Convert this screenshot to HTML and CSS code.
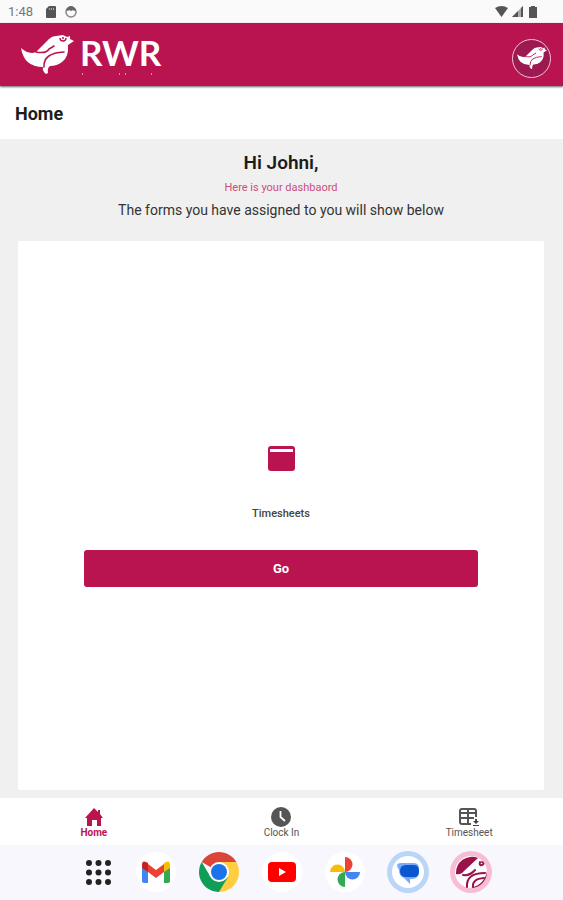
FILE: index.html
```html
<!DOCTYPE html>
<html lang="en">
<head>
<meta charset="utf-8">
<meta name="viewport" content="width=device-width, initial-scale=1">
<title>Home</title>
<link rel="stylesheet" href="styles.css">
</head>
<body>
<svg class="defs" aria-hidden="true">
  <symbol id="bird" viewBox="0 0 53 39">
    <path fill="#fff" d="M0 13Q8 20 15 17L28 4Q31 1 35 1L42 0L46 2L49 1L49 4L53 6L47 10Q48 22 41 27Q36 31 29 31Q26 33 27 38L25 39Q21 36 22 32Q3 32 0 13Z"/>
    <path fill="none" stroke="#b91450" stroke-width="1.6" stroke-linecap="round" d="M15 17Q25 19 28 14L33 11M23 32Q22 18 43 17"/>
    <path fill="none" stroke="#b91450" stroke-width="1.4" d="M39 3Q39 6 42 6T45 3"/><circle cx="42" cy="3" r="1" fill="#b91450"/>
  </symbol>
</svg>
<div class="screen">
  <div class="status">
    <span class="time">1:48</span>
    <svg width="10" height="12" viewBox="0 0 10 12"><path fill="#555" d="M3 0h6q1 0 1 1v10q0 1-1 1H1q-1 0-1-1V3z"/><path stroke="#aaa" d="M3.500 2v2M5.500 2v2M7.500 2v2"/></svg>
    <svg class="ring" width="12" height="12" viewBox="0 0 12 12"><circle cx="6" cy="6" r="5" fill="none" stroke="#888" stroke-width="1.500"/><path fill="#666" d="M1 4Q3 0 6 0t5 4l-2 1-1-1-2 1-2-1-1 1z"/></svg>
    <span class="spacer"></span>
    <svg width="13" height="11" viewBox="0 0 13 11"><path fill="#555" d="M0 2Q6.500-2 13 2L6.500 11z"/></svg>
    <svg width="11" height="11" viewBox="0 0 11 11"><path fill="#aaa" d="M0 11L11 0v11z"/><path fill="#555" d="M0 11L6 5v6zM9 2l2-2v11H9z"/></svg>
    <svg class="battery" width="8" height="12" viewBox="0 0 8 12"><path fill="#555" d="M2 0h4v1h2v11H0V1h2z"/></svg>
  </div>
  <header class="brandbar">
    <svg class="bird" aria-hidden="true"><use href="#bird"/></svg>
    <div class="brand">
      <span class="wordmark">RWR</span>
      <svg class="ticks" viewBox="0 0 80 3" aria-hidden="true"><path fill="#e58bae" d="M2 0h1v2h-1zM39 0h1v2h-1zM45 0h1v2h-1zM71 0h1v2h-1z"/></svg>
    </div>
    <button class="avatar" aria-label="Profile"><svg aria-hidden="true"><use href="#bird"/></svg></button>
  </header>
  <h1 class="title">Home</h1>
  <main>
    <h2>Hi Johni,</h2>
    <p class="sub">Here is your dashbaord</p>
    <p class="info">The forms you have assigned to you will show below</p>
    <section class="card">
      <svg width="27" height="25" viewBox="0 0 27 25"><rect width="27" height="25" rx="3" fill="#b91450"/><rect x="2" y="3" width="23" height="3" fill="#fff"/></svg>
      <h3>Timesheets</h3>
      <button class="go">Go</button>
    </section>
  </main>
  <nav class="tabs">
    <a class="active" href="#home"><svg width="20" height="20" viewBox="0 0 20 20"><path fill="#b91450" d="M10 1l4 4V3h2v4l3 4h-2v8h-4v-6H8v6H3v-8H1z"/></svg><span>Home</span></a>
    <a href="#clock"><svg width="20" height="20" viewBox="0 0 20 20"><circle cx="10" cy="10" r="10" fill="#555"/><path fill="none" stroke="#fff" stroke-width="1.800" d="M9.500 4v6l4.500 4"/></svg><span>Clock In</span></a>
    <a href="#timesheet"><svg width="20" height="20" viewBox="0 0 20 20"><path fill="none" stroke="#555" stroke-width="2" d="M12 17H3Q1 17 1 15V4Q1 2 3 2H15Q17 2 17 4V10M1 6H17M1 11H15M9 3V16"/><path fill="#444" d="M16 12h2v2h2l-3 3-3-3h2zM14 18h6v1h-6z"/></svg><span>Timesheet</span></a>
  </nav>
  <footer class="dock">
    <button aria-label="All apps"><svg viewBox="0 0 42 42"><g fill="#222"><circle cx="12" cy="12" r="3"/><circle cx="21.500" cy="12" r="3"/><circle cx="31" cy="12" r="3"/><circle cx="12" cy="21.500" r="3"/><circle cx="21.500" cy="21.500" r="3"/><circle cx="31" cy="21.500" r="3"/><circle cx="12" cy="31" r="3"/><circle cx="21.500" cy="31" r="3"/><circle cx="31" cy="31" r="3"/></g></svg></button>
    <button aria-label="Mail"><svg viewBox="0 0 42 42"><circle cx="21" cy="21" r="20" fill="#fff"/><path fill="#4285f4" d="M7 14l6 4v14H9q-2 0-2-2z"/><path fill="#34a853" d="M29 18l6-4v16q0 2-2 2h-4z"/><path fill="#ea4335" d="M13 13l8 6 8-6v8l-8 6-8-6z"/><path fill="#c5221f" d="M7 14q0-6 6-2v9l-6-4z"/><path fill="#fbbc04" d="M29 12q6-4 6 2v3l-6 4z"/></svg></button>
    <button aria-label="Browser"><svg viewBox="0 0 42 42"><path fill="#db4437" d="M21 21L3.700 11A20 20 0 0 1 38.300 11z"/><path fill="#ffcd40" d="M21 11h17.300A20 20 0 0 1 21 41l9-16z"/><path fill="#0f9d58" d="M3.700 11A20 20 0 0 0 21 41l9-15-18-1z"/><circle cx="21" cy="21" r="10" fill="#fff"/><circle cx="21" cy="21" r="8" fill="#1a73e8"/></svg></button>
    <button aria-label="Videos"><svg viewBox="0 0 42 42"><circle cx="21" cy="21" r="20" fill="#fff"/><rect x="7" y="11" width="28" height="20" rx="4" fill="#f00"/><path fill="#fff" d="M18 17l7 4-7 4z"/></svg></button>
    <button aria-label="Photos"><svg viewBox="0 0 42 42"><circle cx="21" cy="21" r="20" fill="#fff"/><path fill="#ea4335" d="M21 21V6a7.500 7.500 0 0 1 0 15z"/><path fill="#4285f4" d="M21 21h15a7.500 7.500 0 0 1-15 0z"/><path fill="#34a853" d="M21 21v15a7.500 7.500 0 0 1 0-15z"/><path fill="#fbbc04" d="M21 21H6a7.500 7.500 0 0 1 15 0z"/></svg></button>
    <button aria-label="Messages"><svg viewBox="0 0 42 42"><circle cx="21" cy="21" r="21" fill="#b9d6f8"/><circle cx="21" cy="21" r="16" fill="#fff"/><path fill="#7baaf7" d="M14 12h13q5 0 5 6v3q0 7-7 7h-2v5l-6-6q-5-2-5-8l-2-4q0-3 4-3z"/><path fill="#0b57d0" d="M19 14h8q5 0 5 6t-5 6h-8q-6 0-6-6t6-6z"/></svg></button>
    <button aria-label="RWR"><svg viewBox="0 0 42 42"><circle cx="21" cy="21" r="21" fill="#f7bdd5"/><circle cx="21" cy="21" r="16" fill="#fff"/><path fill="#9b124a" d="M6 23A16 16 0 0 1 28 7L14 20Q11 24 6 23zM37 20A16 16 0 0 1 21 37Q35 33 37 20z"/><path fill="none" stroke="#9b124a" stroke-width="2" stroke-linecap="round" d="M13 24Q20 25 25 19M17 36Q16 22 35 22M23 36Q22 28 34 27M30 11Q29 15 32 14T32 11"/></svg></button>
  </footer>
</div>
</body>
</html>
```
FILE: styles.css
```css
* { box-sizing: border-box; }
body { margin: 0; font-family: Roboto, "Liberation Sans", sans-serif; color: #1c1c1c; }
h1, h2, h3, p { margin: 0; }
button { border: 0; padding: 0; font: inherit; background: none; }
.defs { display: none; }
.screen { min-height: 100vh; display: flex; flex-direction: column; background: #fff; }
.status { display: flex; align-items: center; height: 23px; padding: 0 26px 0 8px; background: #fafafa; gap: 4px; }
.time { font-size: 13px; color: #777; margin-right: 9px; }
.ring { margin-left: 5px; }
.spacer { flex: 1; }
.battery { margin-left: 2px; }
.brandbar { display: flex; align-items: center; height: 63px; padding: 0 12px 0 21px; background: #b91450; box-shadow: 0 1px 2px #666; }
.bird { width: 53px; height: 39px; }
.brand { display: flex; flex-direction: column; margin-left: 6px; }
.wordmark { font: 700 35px/38px Lato, sans-serif; color: #fff; }
.ticks { width: 80px; height: 3px; margin-top: 2px; }
.avatar { margin-left: auto; margin-top: 7px; width: 39px; height: 39px; border: 1px solid #f3c4d6; border-radius: 50%; background: #9c1a50; display: grid; place-items: center; }
.avatar svg { width: 30px; height: 24px; }
.title { padding: 16px 15px 13px; font-size: 18px; line-height: 24px; font-weight: 700; }
main { flex: 1; display: flex; flex-direction: column; padding: 12px 19px 8px 18px; background: #f0f0f0; text-align: center; }
h2 { font-size: 19px; line-height: 24px; font-weight: 600; }
.sub { font-size: 11px; line-height: 16px; margin-top: 5px; color: #c94f7c; }
.info { font-size: 14px; line-height: 20px; margin-top: 4px; color: #333; }
.card { flex: 1; margin-top: 21px; padding-top: 2px; background: #fff; display: flex; flex-direction: column; align-items: center; justify-content: center; border-radius: 2px; }
.card h3 { font-size: 11px; line-height: 16px; font-weight: 500; color: #444; margin: 35px 0 28px; }
.go { width: 75%; height: 37px; border-radius: 3px; background: #b91450; color: #fff; font-size: 13px; font-weight: 700; }
.tabs { display: grid; grid-template-columns: repeat(3, 1fr); height: 47px; padding-top: 9px; background: #fff; }
.tabs a { display: flex; flex-direction: column; align-items: center; color: #555; text-decoration: none; font-size: 10px; line-height: 12px; }
.tabs .active { color: #b91450; font-weight: 700; }
.dock { display: flex; justify-content: center; gap: 21px; height: 55px; padding-top: 6px; background: #f9f7fe; }
.dock button { width: 42px; height: 42px; }
.dock button:first-child { margin-right: -5px; }
.dock button:last-child { margin-right: -5px; }
.dock svg { width: 42px; height: 42px; display: block; }
```
